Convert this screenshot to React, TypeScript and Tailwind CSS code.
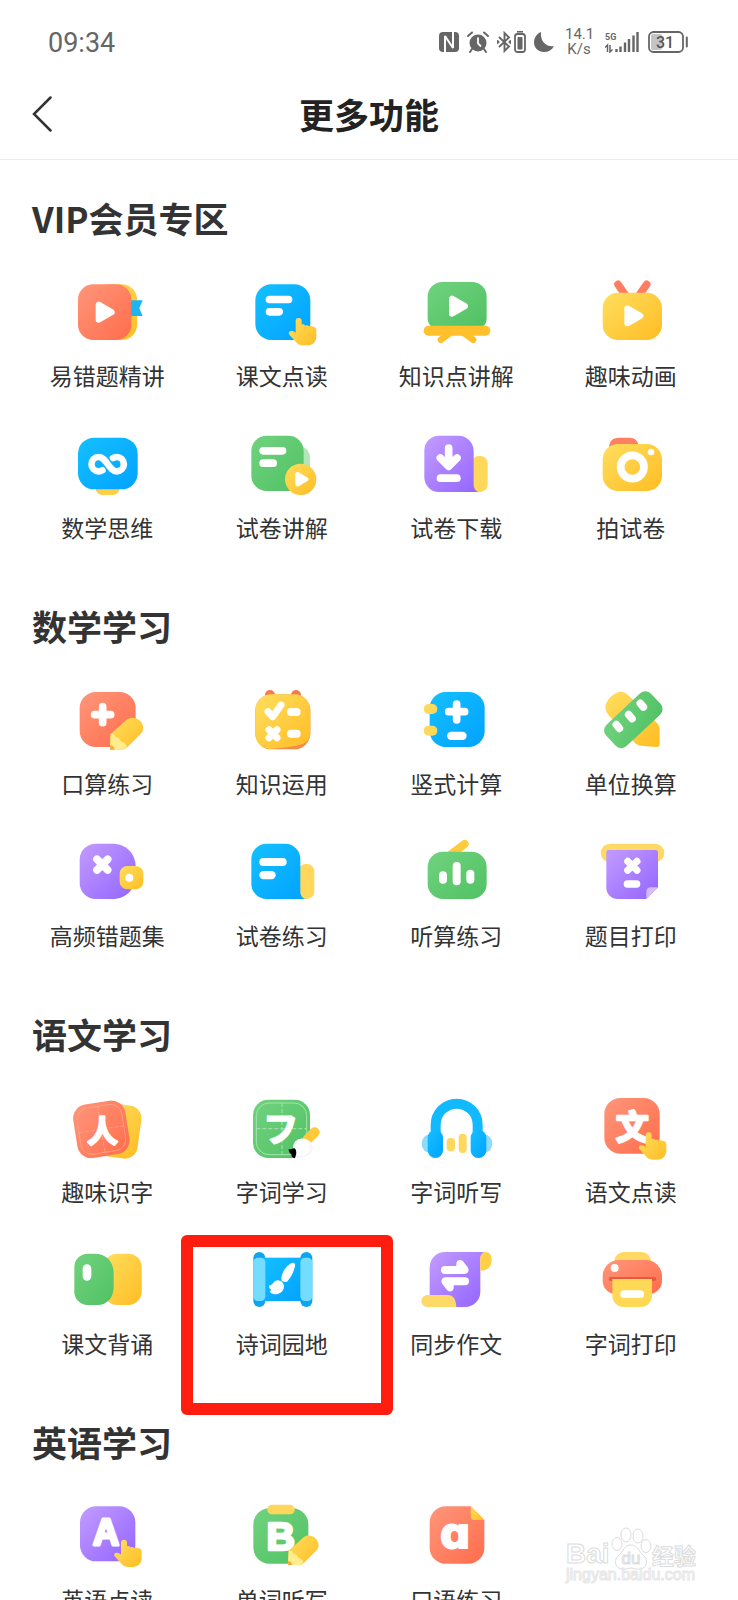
import type { ReactNode } from 'react';

const iconFont = '"Noto Sans CJK SC", sans-serif';
const latinFont = '"Liberation Sans", sans-serif';

function Gradients() {
  const stops = [
    { id: 'orange', from: '#ff9276', to: '#ff7150' },
    { id: 'blue', from: '#12bdff', to: '#04a5ff' },
    { id: 'green', from: '#6dd17b', to: '#54c367' },
    { id: 'yellow', from: '#ffdb58', to: '#ffc02a' },
    { id: 'purple', from: '#be96ff', to: '#976aff' },
  ];
  return (
    <svg className="absolute h-0 w-0" aria-hidden="true">
      <defs>
        {stops.map((s) => (
          <linearGradient key={s.id} id={s.id} x1="0" y1="0" x2="1" y2="1">
            <stop offset="0.1" stopColor={s.from} />
            <stop offset="0.9" stopColor={s.to} />
          </linearGradient>
        ))}
      </defs>
    </svg>
  );
}

// White play triangle, 57 x 63 before scaling
function Play({ x, y, scale = 1 }: { x: number; y: number; scale?: number }) {
  return (
    <path
      transform={`translate(${x} ${y}) scale(${scale})`}
      d="M9 9v45l39-22.5z"
      fill="#fff"
      stroke="#fff"
      strokeWidth="18"
      strokeLinejoin="round"
    />
  );
}

function Hand({ x, y }: { x: number; y: number }) {
  return (
    <path
      transform={`translate(${x} ${y})`}
      d="M21 9a9 9 0 0 1 18 0v11c4-2 8-1 10 3 5-2 9-1 12 2 5-2 9-1 12 1 7 0 10 4 10 11v16c0 19-11 29-27 29H44c-11 0-18-4-23-11L2 50c-4-6 0-12 7-11 5 0 9 2 12 6z"
      fill="url(#yellow)"
    />
  );
}

function Pencil({ x, y, scale = 1 }: { x: number; y: number; scale?: number }) {
  return (
    <g transform={`translate(${x} ${y}) scale(${scale})`}>
      <path d="M2 50 50 7c11-9 29-8 40 3 12 12 13 30 2 40L52 90c-5 5-12 7-20 7H0z" fill="url(#yellow)" />
      <path d="M2 50c5-2 10 0 12 4 2 5 6 8 13 8 3 8 7 12 14 14 6 3 9 8 9 14-5 5-11 7-18 7H0z" fill="#ffec8c" />
      <path d="M1 84c7 0 12 5 12 13H0z" fill="#f9a83a" />
    </g>
  );
}

function Bar({ x, y, w, h }: { x: number; y: number; w: number; h: number }) {
  return <rect x={x} y={y} width={w} height={h} rx={Math.min(w, h) / 2} fill="#fff" />;
}

function Strokes({ d, width = 23 }: { d: string; width?: number }) {
  return <path d={d} fill="none" stroke="#fff" strokeWidth={width} strokeLinecap="round" strokeLinejoin="round" />;
}

const icons: Record<string, ReactNode> = {
  mistakeVideo: (
    <>
      <rect x="70" y="25" width="128" height="167" rx="46" fill="url(#yellow)" />
      <path d="M178 73h37l-10 24 10 23h-37z" fill="#1db4f2" />
      <rect x="21" y="25" width="160" height="167" rx="46" fill="url(#orange)" />
      <Play x={74} y={77} />
    </>
  ),
  textReading: (
    <>
      <rect x="28" y="25" width="165" height="167" rx="48" fill="url(#blue)" />
      <Bar x={59} y={59} w={80} h={23} />
      <Bar x={59} y={96} w={52} h={23} />
      <Hand x={128} y={126} />
    </>
  ),
  knowledgeVideo: (
    <>
      <path d="M67 18h89a44 44 0 0 1 44 44v65c0 10-3 17-9 23H32c-6-6-9-13-9-23V62a44 44 0 0 1 44-44z" fill="url(#green)" />
      <rect x="11" y="149" width="200" height="30" rx="15" fill="#ffc02b" />
      <path d="M94 168 63 191M128 168l31 23" stroke="#ffc02b" strokeWidth="20" strokeLinecap="round" />
      <Play x={87} y={59} />
    </>
  ),
  animation: (
    <>
      <path d="m69 25 22 32M155 25l-22 32" stroke="#ff7d62" strokeWidth="23" strokeLinecap="round" />
      <rect x="23" y="50" width="178" height="142" rx="46" fill="url(#yellow)" />
      <Play x={88} y={88} />
    </>
  ),
  mathThinking: (
    <>
      <rect x="74" y="160" width="72" height="41" rx="20" fill="#ffcf4a" />
      <rect x="21" y="29" width="179" height="155" rx="48" fill="url(#blue)" />
      <Strokes
        width={20}
        d="M94 127c-3 2-7 3-11 3a21 21 0 0 1 0-43c23 0 31 43 54 43a21 21 0 0 0 0-43c-4 0-8 1-11 3"
      />
    </>
  ),
  paperExplain: (
    <>
      <rect x="100" y="53" width="92" height="120" rx="36" fill="#b2e6b8" />
      <rect x="16" y="23" width="157" height="166" rx="46" fill="url(#green)" />
      <Bar x={40} y={57} w={81} h={23} />
      <Bar x={40} y={94} w={53} h={23} />
      <circle cx="164" cy="154" r="47" fill="url(#yellow)" />
      <Play x={148} y={132} scale={0.69} />
    </>
  ),
  paperDownload: (
    <>
      <rect x="155" y="84" width="48" height="108" rx="22" fill="#ffd75a" />
      <path d="M57 23h58a46 46 0 0 1 46 46v101c0 12 8 22 20 22H57a44 44 0 0 1-44-44V67a44 44 0 0 1 44-44z" fill="url(#purple)" />
      <Strokes d="M86 60v50M61 90l25 25 25-25" />
      <path d="M61 90h50l-25 25z" fill="#fff" />
      <Bar x={50} y={139} w={72} h={23} />
    </>
  ),
  camera: (
    <>
      <path d="M42 60c0-20 10-31 30-31h30c18 0 29 9 29 31z" fill="#ff7f63" />
      <rect x="23" y="48" width="178" height="141" rx="46" fill="url(#yellow)" />
      <circle cx="112" cy="117" r="35" fill="none" stroke="#fff" strokeWidth="23" />
      <circle cx="168" cy="72" r="10" fill="#fff" />
    </>
  ),
  mentalMath: (
    <>
      <rect x="26" y="24" width="168" height="165" rx="48" fill="url(#orange)" />
      <Strokes d="M95 68v48M71 92h48" />
      <Pencil x={117} y={100} />
    </>
  ),
  knowledgeUse: (
    <>
      <circle cx="72" cy="33" r="15" fill="#f27c50" />
      <circle cx="150" cy="33" r="15" fill="#f27c50" />
      <rect x="28" y="31" width="165" height="165" rx="48" fill="#f58a4a" />
      <path d="M76 31h69a48 48 0 0 1 48 48v66c0 28-20 38-52 42-26 4-48 7-73 8a46 46 0 0 1-40-46V79a48 48 0 0 1 48-48z" fill="url(#yellow)" />
      <Strokes width={21} d="m66 83 14 15 25-35M69 137l24 24M93 137l-24 24" />
      <Bar x={123} y={72} w={41} h={24} />
      <Bar x={123} y={137} w={41} h={24} />
    </>
  ),
  columnMath: (
    <>
      <rect x="29" y="24" width="165" height="165" rx="48" fill="url(#blue)" />
      <rect x="11" y="60" width="41" height="30" rx="15" fill="#ffd95c" />
      <rect x="11" y="125" width="41" height="30" rx="15" fill="#ffd95c" />
      <Strokes d="M110 60v48M86 83h48" />
      <Bar x={81} y={143} w={59} h={25} />
    </>
  ),
  unitConvert: (
    <>
      <path d="M31 70c0-20 26-47 47-47 11 0 20 8 30 18l74 72c8 7 12 14 12 23v43c0 7-4 11-11 10l-46-4c-8 0-14-5-19-10L45 98c-8-8-14-17-14-28z" fill="url(#yellow)" />
      <rect x="-92" y="-44" width="184" height="88" rx="23" transform="translate(115 107) rotate(-43)" fill="url(#green)" />
      <Strokes d="m64 122 9 11M101 92l10 12M136 58l9 11" />
    </>
  ),
  mistakeSet: (
    <>
      <path d="M74 23h50c42 0 70 30 70 70v24c0 42-28 72-70 72H74a48 48 0 0 1-48-48V71a48 48 0 0 1 48-48z" fill="url(#purple)" />
      <Strokes d="m78 70 32 32M110 70l-32 32" />
      <rect x="146" y="90" width="71" height="70" rx="23" fill="url(#yellow)" />
      <circle cx="175" cy="125" r="12" fill="#fff" />
    </>
  ),
  paperPractice: (
    <>
      <rect x="157" y="84" width="48" height="105" rx="22" fill="#ffd75a" />
      <path d="M62 23h55a46 46 0 0 1 46 46v98c0 12 8 22 20 22H62a46 46 0 0 1-46-46V69a46 46 0 0 1 46-46z" fill="url(#blue)" />
      <Bar x={40} y={66} w={82} h={24} />
      <Bar x={40} y={105} w={49} h={25} />
    </>
  ),
  listenMath: (
    <>
      <path d="M134 24 94 54" stroke="#ffcb3c" strokeWidth="24" strokeLinecap="round" />
      <rect x="23" y="47" width="177" height="142" rx="46" fill="url(#green)" />
      <Bar x={57} y={106} w={24} h={37} />
      <Bar x={98} y={78} w={24} h={70} />
      <Bar x={139} y={101} w={24} h={42} />
    </>
  ),
  printTopic: (
    <>
      <rect x="17" y="23" width="191" height="56" rx="28" fill="#ffd968" />
      <path d="M41 42h141a7 7 0 0 1 7 7v105l-35 35H68a34 34 0 0 1-34-34V49a7 7 0 0 1 7-7z" fill="url(#purple)" />
      <path d="M154 189v-22c0-8 5-13 13-13h22z" fill="#d5bcff" />
      <Strokes width={21} d="m98 76 28 27M126 76l-28 27" />
      <Bar x={86} y={133} w={50} h={22} />
    </>
  ),
  characterFun: (
    <>
      <rect x="-60" y="-80" width="122" height="160" rx="38" transform="translate(144 117) rotate(8)" fill="url(#yellow)" />
      <g transform="translate(91 112) rotate(-9)">
        <rect x="-79" y="-81" width="158" height="162" rx="42" fill="url(#orange)" />
        <rect x="-68" y="-70" width="136" height="140" rx="34" fill="none" stroke="#ffa892" strokeWidth="2" />
        <path d="M-68 0H68M0-70V70" stroke="#ffa892" strokeWidth="2" strokeDasharray="12 6" />
      </g>
      <text x="95" y="149" textAnchor="middle" fontSize="92" fontWeight="700" fontFamily={iconFont} fill="#fff" stroke="#fff" strokeWidth="7" strokeLinejoin="round">
        人
      </text>
    </>
  ),
  wordStudy: (
    <>
      <rect x="21" y="23" width="171" height="175" rx="46" fill="url(#green)" />
      <rect x="31" y="33" width="151" height="155" rx="38" fill="none" stroke="#a5e3ad" strokeWidth="3" />
      <path d="M31 110h151M108 33v155" stroke="#a5e3ad" strokeWidth="3" strokeDasharray="12 6" />
      <text x="104" y="150" textAnchor="middle" fontSize="106" fontWeight="700" fontFamily={iconFont} fill="#fff" stroke="#fff" strokeWidth="5" strokeLinejoin="round">
        フ
      </text>
      <path d="m185 142 21-21" stroke="#ffc939" strokeWidth="30" strokeLinecap="round" />
      <path d="M144 158c4-14 18-20 32-18 16 4 26 16 24 30-4 18-22 28-52 28z" fill="#f3f5ff" />
      <circle cx="167" cy="166" r="26" fill="#fff" />
      <path d="M128 171c8 4 12-4 18-2 6 6 7 18 0 30-8-2-10-6-10-12-6-4-8-10-8-16z" fill="#000" />
    </>
  ),
  dictation: (
    <>
      <ellipse cx="30" cy="155" rx="25" ry="28" fill="#8edcfb" />
      <ellipse cx="192" cy="155" rx="25" ry="28" fill="#8edcfb" />
      <path d="M47 130V98a63 63 0 0 1 126 0v32" fill="none" stroke="#12b9ff" strokeWidth="30" />
      <rect x="23" y="114" width="46" height="84" rx="23" fill="url(#blue)" />
      <rect x="152" y="114" width="47" height="84" rx="23" fill="url(#blue)" />
      <rect x="80" y="138" width="25" height="40" rx="12" fill="#ffd75c" />
      <rect x="116" y="125" width="24" height="58" rx="12" fill="#ffd75c" />
    </>
  ),
  chineseReading: (
    <>
      <rect x="28" y="18" width="166" height="167" rx="48" fill="url(#orange)" />
      <text x="112" y="142" textAnchor="middle" fontSize="98" fontWeight="700" fontFamily={iconFont} fill="#fff" stroke="#fff" strokeWidth="8" strokeLinejoin="round">
        文
      </text>
      <Hand x={131} y={121} />
    </>
  ),
  recite: (
    <>
      <rect x="98" y="29" width="114" height="154" rx="40" fill="url(#yellow)" />
      <path d="M50 29h20c36 0 58 24 58 58v42c0 32-20 54-48 54H50a40 40 0 0 1-40-40V69a40 40 0 0 1 40-40z" fill="url(#green)" />
      <Bar x={35} y={61} w={26} h={49} />
    </>
  ),
  poetry: (
    <>
      <rect x="22" y="24" width="36" height="165" rx="18" fill="#0fa5ee" />
      <rect x="163" y="24" width="36" height="165" rx="18" fill="#0fa5ee" />
      <rect x="50" y="41" width="120" height="130" fill="url(#blue)" />
      <rect x="22" y="41" width="36" height="130" rx="14" fill="#74dcff" />
      <rect x="163" y="41" width="36" height="130" rx="14" fill="#74dcff" />
      <path d="M106 104c1-18 13-37 29-46 9-5 14 0 12 9-4 17-12 33-24 46-7 3-17-1-17-9z" fill="#fff" />
      <path d="M69 124c10 3 12-13 25-15 13 0 20 9 20 19-1 15-14 23-29 23-8-1-12-5-14-9 4-1 4-3 3-6-4-3-6-7-5-12z" fill="#fff" />
    </>
  ),
  composition: (
    <>
      <path d="M75 24h118c-8 5-12 12-12 22v97a46 46 0 0 1-46 46h-30c0-24-12-36-34-36H29V70a46 46 0 0 1 46-46z" fill="url(#purple)" />
      <path d="M22 153h62c15 0 24 12 25 36H22a18 18 0 0 1 0-36z" fill="#ffd968" />
      <path d="M181 80V42c0-10 6-18 16-18 11 0 18 9 18 24 0 20-12 32-34 32z" fill="#ffcf45" />
      <path d="M75 66h34v-7c0-11 13-15 20-7l14 18c6 9 1 20-9 20H75a12 12 0 0 1 0-24z" fill="#fff" />
      <path d="M75 66h34v-7c0-11 13-15 20-7l14 18c6 9 1 20-9 20H75a12 12 0 0 1 0-24z" transform="rotate(180 105 95)" fill="#fff" />
    </>
  ),
  printWords: (
    <>
      <rect x="58" y="24" width="110" height="60" rx="28" fill="#ffd964" />
      <path d="M71 48h82a48 48 0 0 1 48 48v14a41 41 0 0 1-41 41H64a41 41 0 0 1-41-41V96a48 48 0 0 1 48-48z" fill="url(#orange)" />
      <rect x="41" y="99" width="143" height="12" rx="6" fill="#e9593c" />
      <path d="M52 105h119v50a34 34 0 0 1-34 34H86a34 34 0 0 1-34-34z" fill="#ffd955" />
      <Bar x={76} y={139} w={71} h={23} />
      <circle cx="59" cy="72" r="12" fill="#fff" />
    </>
  ),
  englishReading: (
    <>
      <rect x="27" y="19" width="166" height="165" rx="48" fill="url(#purple)" />
      <text x="105" y="134" textAnchor="middle" fontSize="108" fontWeight="700" fontFamily={latinFont} fill="#fff" stroke="#fff" strokeWidth="9" strokeLinejoin="round">
        A
      </text>
      <Hand x={129} y={119} />
    </>
  ),
  wordDictation: (
    <>
      <rect x="22" y="25" width="165" height="166" rx="48" fill="url(#green)" />
      <rect x="64" y="14" width="82" height="29" rx="14" fill="#ffd75c" />
      <text x="104" y="150" textAnchor="middle" fontSize="118" fontWeight="700" fontFamily={latinFont} fill="#fff" stroke="#fff" strokeWidth="8" strokeLinejoin="round">
        B
      </text>
      <Pencil x={126} y={106} scale={0.92} />
    </>
  ),
  speaking: (
    <>
      <path d="M77 19h75l41 41v83a48 48 0 0 1-48 48H77a48 48 0 0 1-48-48V67a48 48 0 0 1 48-48z" fill="url(#orange)" />
      <path d="M152 19l41 41h-29c-8 0-12-4-12-12z" fill="url(#yellow)" />
      <text x="106" y="144" textAnchor="middle" fontSize="128" fontWeight="700" fontFamily='"DejaVu Sans", sans-serif' fill="#fff" stroke="#fff" strokeWidth="6" strokeLinejoin="round">
        ɑ
      </text>
    </>
  ),
};

const sections = [
  {
    title: 'VIP会员专区',
    items: [
      { label: '易错题精讲', icon: 'mistakeVideo' },
      { label: '课文点读', icon: 'textReading' },
      { label: '知识点讲解', icon: 'knowledgeVideo' },
      { label: '趣味动画', icon: 'animation' },
      { label: '数学思维', icon: 'mathThinking' },
      { label: '试卷讲解', icon: 'paperExplain' },
      { label: '试卷下载', icon: 'paperDownload' },
      { label: '拍试卷', icon: 'camera' },
    ],
  },
  {
    title: '数学学习',
    items: [
      { label: '口算练习', icon: 'mentalMath' },
      { label: '知识运用', icon: 'knowledgeUse' },
      { label: '竖式计算', icon: 'columnMath' },
      { label: '单位换算', icon: 'unitConvert' },
      { label: '高频错题集', icon: 'mistakeSet' },
      { label: '试卷练习', icon: 'paperPractice' },
      { label: '听算练习', icon: 'listenMath' },
      { label: '题目打印', icon: 'printTopic' },
    ],
  },
  {
    title: '语文学习',
    items: [
      { label: '趣味识字', icon: 'characterFun' },
      { label: '字词学习', icon: 'wordStudy' },
      { label: '字词听写', icon: 'dictation' },
      { label: '语文点读', icon: 'chineseReading' },
      { label: '课文背诵', icon: 'recite' },
      { label: '诗词园地', icon: 'poetry', highlighted: true },
      { label: '同步作文', icon: 'composition' },
      { label: '字词打印', icon: 'printWords' },
    ],
  },
  {
    title: '英语学习',
    items: [
      { label: '英语点读', icon: 'englishReading' },
      { label: '单词听写', icon: 'wordDictation' },
      { label: '口语练习', icon: 'speaking' },
    ],
  },
];

function StatusBar() {
  return (
    <div className="flex h-[72px] shrink-0 items-center justify-between pt-3 pr-[50px] pl-12 font-['Roboto',sans-serif] text-[#666]">
      <span className="pt-[2px] text-[27px] leading-8">09:34</span>
      <div className="flex items-center">
        {/* NFC */}
        <svg className="mr-2 h-[22px] w-5" viewBox="0 0 20 22" fill="none">
          <rect x="0" y="1" width="20" height="20" rx="4" fill="#666" />
          <path d="M6 21V5l8 12V1" stroke="#fff" strokeWidth="2" strokeLinejoin="bevel" />
        </svg>
        {/* Alarm */}
        <svg className="mr-2 h-[22px] w-[22px]" viewBox="0 0 22 22" fill="none">
          <circle cx="11" cy="12" r="8.500" fill="#666" />
          <path d="m1 5 4-3.500M21 5l-4-3.500M5 18l-2 3M17 18l2 3" stroke="#666" strokeWidth="2" strokeLinecap="round" />
          <path d="M11 6.500v6l3 3" stroke="#fff" strokeWidth="1.800" />
        </svg>
        {/* Bluetooth */}
        <svg className="mr-[3px] h-[22px] w-[14px]" viewBox="0 0 14 22" fill="none" stroke="#666" strokeWidth="1.900">
          <path d="m2 6 10 9.500L7.500 20V2L12 6.500 2 16" />
          <path d="M0 9.500 1.500 11 0 12.500M14 9.500 12.500 11l1.500 1.500" />
        </svg>
        <svg className="mr-2 h-[22px] w-3" viewBox="0 0 12 22" fill="none">
          <rect x="1" y="3" width="10" height="18" rx="2.500" stroke="#666" strokeWidth="1.800" />
          <path d="M3 .8h6" stroke="#666" strokeWidth="1.600" />
          <rect x="3.500" y="6" width="5" height="12.500" rx="1" fill="#666" />
        </svg>
        {/* Do not disturb */}
        <svg className="mr-[11px] h-[22px] w-5" viewBox="0 0 20 22">
          <path d="M7 1C2.500 3 0 7 0 11.500 0 17 4.500 21 10 21c4.500 0 8-2 10-6-7 1.500-14-4-13-14z" fill="#666" />
        </svg>
        <span className="mr-3 w-7 text-center text-[15px] leading-[15px]">
          14.1
          <br />
          K/s
        </span>
        {/* Signal */}
        <svg className="mr-[9px] h-[22px] w-[34px]" viewBox="0 0 34 22">
          <text x="0" y="9" fontSize="9" fontWeight="700" fill="#666">
            5G
          </text>
          <path d="M0 16.500l2.500-2.500v7M5 14v7l2.500-2.500" fill="none" stroke="#666" strokeWidth="1.500" />
          <path d="M11.500 18v3M15.500 15.500V21M20 11.500V21M24 8v13M28.500 4.500V21M32.500 1v20" fill="none" stroke="#666" strokeWidth="2.400" />
        </svg>
        {/* Battery */}
        <svg className="h-[22px] w-10" viewBox="0 0 40 22">
          <rect x="3" y="3" width="11" height="16" rx="2" fill="#c4c4c4" />
          <rect x="1" y="1" width="34" height="20" rx="4.500" fill="none" stroke="#666" strokeWidth="1.800" />
          <path d="M38.800 6.500v9" stroke="#666" strokeWidth="2" strokeLinecap="round" />
          <text x="17" y="16.500" textAnchor="middle" fontSize="16" fontWeight="500" fill="#555">
            31
          </text>
        </svg>
      </div>
    </div>
  );
}

function Watermark() {
  return (
    <svg className="pointer-events-none absolute right-[34px] bottom-4 h-[66px] w-[140px]" viewBox="0 0 140 66" fill="#fff" stroke="#dcdcdc" strokeWidth="1">
      <text x="2" y="45" fontSize="28" fontWeight="700" fontFamily={latinFont}>
        Bai
      </text>
      <ellipse cx="53" cy="26" rx="5" ry="6.500" />
      <ellipse cx="62" cy="17" rx="5" ry="7" />
      <ellipse cx="74" cy="18" rx="5" ry="7" />
      <ellipse cx="82" cy="28" rx="5" ry="6.500" />
      <path d="M67 27c7 0 8 7 12 10 5 4 5 13-3 14-4 1-6-1-9-1s-6 2-10 1c-7-2-7-10-2-14 4-3 5-10 12-10z" />
      <text x="67" y="46" textAnchor="middle" fontSize="17" fontFamily={latinFont}>
        du
      </text>
      <text x="88" y="46" fontSize="22" fontWeight="700" fontFamily={iconFont}>
        经验
      </text>
      <text x="2" y="62" fontSize="16" fontFamily={latinFont} stroke="#e6e6e6">
        jingyan.baidu.com
      </text>
    </svg>
  );
}

export default function App() {
  return (
    <div className="relative flex h-screen flex-col overflow-hidden bg-white font-['Noto_Sans_CJK_SC',sans-serif] text-[#333]">
      <Gradients />
      <StatusBar />

      <header className="grid h-[88px] shrink-0 grid-cols-[64px_1fr_64px] items-center border-b border-[#ececec] pb-1">
        <button type="button" aria-label="返回" className="flex h-full items-center pl-8">
          <svg className="h-9 w-5" viewBox="0 0 20 36" fill="none" stroke="#333" strokeWidth="2.500" strokeLinecap="round">
            <path d="M18.500 1.500 2 18l16.500 16.500" />
          </svg>
        </button>
        <h1 className="text-center text-[35px] leading-[48px] font-bold text-[#222]">更多功能</h1>
      </header>

      <main className="min-h-0 flex-1 overflow-hidden pt-[34px]">
        {sections.map((section) => (
          <section key={section.title} className="mb-[58px]">
            <h2 className="px-8 text-[35px] leading-[48px] font-bold">{section.title}</h2>
            <div className="mt-[34px] grid grid-cols-4 gap-y-9 px-5">
              {section.items.map((item) => (
                <div key={item.label} className="relative">
                  <button type="button" className="flex w-full flex-col items-center">
                    <svg className="h-[72px] w-[72px] overflow-visible" viewBox="0 0 216 216" fill="none" aria-hidden="true">
                      {icons[item.icon]}
                    </svg>
                    <span className="mt-[10px] text-[23px] leading-[34px] whitespace-nowrap">{item.label}</span>
                  </button>
                  {item.highlighted && (
                    <div className="pointer-events-none absolute -top-[9px] -right-6 -bottom-[55px] -left-[14px] rounded-md border-[12px] border-[#ff1d10]" />
                  )}
                </div>
              ))}
            </div>
          </section>
        ))}
      </main>

      <Watermark />
    </div>
  );
}
